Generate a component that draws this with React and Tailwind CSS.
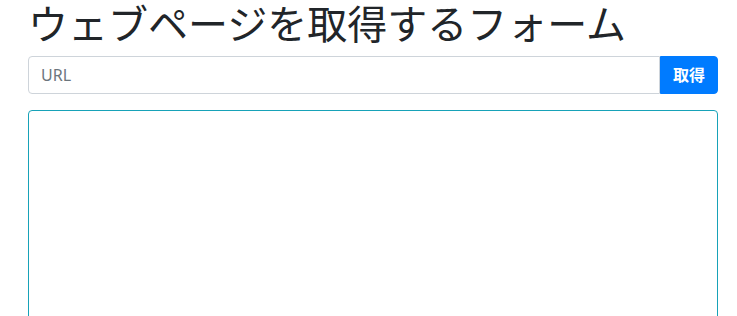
export default function App() {
  return (
    <div
      className="h-screen overflow-hidden bg-white pl-[28px] pr-[19px] text-[#212529]"
      style={{ fontFamily: '"Noto Sans", "Noto Sans CJK JP", sans-serif' }}
    >
      {/* Title */}
      <h1 className="mb-2 text-[40px] font-normal leading-[1.2] whitespace-nowrap">
        ウェブページを取得するフォーム
      </h1>

      {/* URL input group */}
      <div className="flex h-[38px]">
        <input
          type="text"
          placeholder="URL"
          className="h-full min-w-0 flex-1 rounded-l-[4px] border border-[#ced4da] px-3 text-base text-[#495057] outline-none placeholder:text-[#6c757d]"
        />
        <button className="h-full rounded-r-[4px] border border-[#007bff] bg-[#007bff] px-3 text-base font-bold text-white">
          取得
        </button>
      </div>

      {/* Result area */}
      <textarea className="mt-4 block h-[240px] w-full resize-none rounded-[4px] border border-[#17a2b8] outline-none" />
    </div>
  )
}
